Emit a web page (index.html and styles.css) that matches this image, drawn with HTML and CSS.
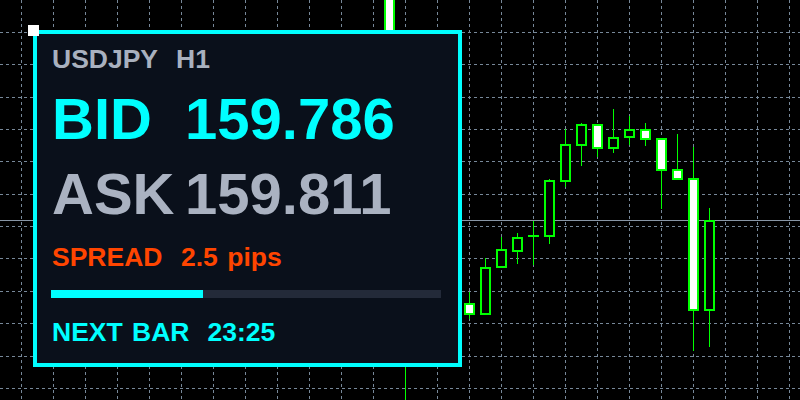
FILE: index.html
```html
<!DOCTYPE html>
<html lang="en">
<head>
    <meta charset="UTF-8">
    <meta name="viewport" content="width=device-width, initial-scale=1.0">
    <title>USDJPY H1</title>
    <link rel="stylesheet" href="styles.css">
</head>

<body>
    <div class="chart">
        <!-- 圖表：格線、價格線與K線 -->
        <svg class="chart-canvas" width="800" height="400" viewBox="0 0 800 400">
            <path class="grid" d="M21.5 0V400M53.5 0V400M85.5 0V400M117.5 0V400M149.5 0V400M181.5 0V400M213.5 0V400M245.5 0V400M277.5 0V400M309.5 0V400M341.5 0V400M373.5 0V400M405.5 0V400M437.5 0V400M469.5 0V400M501.5 0V400M533.5 0V400M565.5 0V400M597.5 0V400M629.5 0V400M661.5 0V400M693.5 0V400M725.5 0V400M757.5 0V400M789.5 0V400"/>
            <path class="grid" d="M0 32.5H800M0 64.5H800M0 97.5H800M0 129.5H800M0 161.5H800M0 194.5H800M0 226.5H800M0 258.5H800M0 291.5H800M0 323.5H800M0 356.5H800M0 388.5H800"/>
            <path class="bid-line" d="M0 220.5H800"/>

            <path class="wick" d="M389.5 -10V120M405.5 300V400M469.5 292V319M485.5 258V315M501.5 237V268M517.5 233V264M533.5 221V265M549.5 179V244M565.5 129V187M581.5 123V166M597.5 124V157M613.5 109V153M629.5 116V145M645.5 123V146M661.5 138V209M677.5 134V180M693.5 147V351M709.5 208V347"/>

            <rect class="bear" x="385" y="-10" width="9" height="110"/>
            <rect class="bear" x="465" y="304" width="9" height="10"/>
            <rect class="bull" x="481" y="268" width="9" height="46"/>
            <rect class="bull" x="497" y="250" width="9" height="17"/>
            <rect class="bull" x="513" y="238" width="9" height="13"/>
            <rect class="doji" x="528" y="235" width="11" height="2"/>
            <rect class="bull" x="545" y="181" width="9" height="55"/>
            <rect class="bull" x="561" y="145" width="9" height="36"/>
            <rect class="bull" x="577" y="125" width="9" height="20"/>
            <rect class="bear" x="593" y="125" width="9" height="23"/>
            <rect class="bull" x="609" y="138" width="9" height="10"/>
            <rect class="bull" x="625" y="130" width="9" height="7"/>
            <rect class="bear" x="641" y="130" width="9" height="9"/>
            <rect class="bear" x="657" y="139" width="9" height="31"/>
            <rect class="bear" x="673" y="170" width="9" height="9"/>
            <rect class="bear" x="689" y="179" width="9" height="131"/>
            <rect class="bull" x="705" y="221" width="9" height="89"/>
        </svg>

        <!-- 報價面板 -->
        <div class="quote-panel">
            <div class="row row-small symbol">
                <span class="symbol-name">USDJPY</span><span>H1</span>
            </div>
            <div class="row row-big bid">
                <span class="label">BID</span><span>159.786</span>
            </div>
            <div class="row row-big ask">
                <span class="label">ASK</span><span>159.811</span>
            </div>
            <div class="row row-small spread">
                <span class="label">SPREAD</span><span>2.5 pips</span>
            </div>
            <div class="progress">
                <div class="progress-fill" style="width: 39%"></div>
            </div>
            <div class="row row-small next-bar">
                <span class="label">NEXT BAR</span><span>23:25</span>
            </div>
        </div>

        <div class="handle"></div>
    </div>
</body>
</html>
```

FILE: styles.css
```css
body {
    margin: 0;
    background-color: #000000;
    font-family: 'Liberation Sans', Arial, sans-serif;
    font-weight: bold;
}

.chart {
    position: relative;
    width: 800px;
    height: 400px;
    overflow: hidden;
    background-color: #000000;
}

.chart-canvas {
    display: block;
}

.grid {
    fill: none;
    stroke: #778899;
    stroke-width: 1;
    stroke-dasharray: 3 3;
}

.bid-line {
    fill: none;
    stroke: #8896a6;
    stroke-width: 1;
}

.wick {
    fill: none;
    stroke: #00ff00;
    stroke-width: 1;
}

.bull,
.bear {
    stroke: #00ff00;
    stroke-width: 2;
}

.bull {
    fill: #000000;
}

.bear {
    fill: #ffffff;
}

.doji {
    fill: #00ff00;
}

.quote-panel {
    position: absolute;
    left: 33px;
    top: 30px;
    width: 429px;
    height: 337px;
    box-sizing: border-box;
    padding: 5px 17px 0 15px;
    background-color: #0a101b;
    border: 4px solid #00ffff;
}

.row {
    display: flex;
    white-space: nowrap;
}

.row-small {
    font-size: 26.5px;
    line-height: 40px;
    word-spacing: 2px;
}

.row-big {
    font-size: 58px;
    line-height: 70px;
    margin-top: 5px;
}

.row-big .label {
    min-width: 133px;
}

.row-small .label {
    min-width: 129px;
}

.symbol-name {
    padding-right: 18px;
}

.symbol {
    color: #a9b1bf;
}

.bid {
    color: #00ffff;
}

.ask {
    color: #aab2c1;
}

.spread {
    color: #ff4500;
    margin-top: 8px;
}

.progress {
    height: 8px;
    margin: 13px 0 0 -1px;
    background-color: #232a39;
}

.progress-fill {
    height: 100%;
    background-color: #00ffff;
}

.next-bar {
    color: #00ffff;
    margin-top: 14px;
}

.next-bar .label {
    padding-right: 18px;
}

.handle {
    position: absolute;
    left: 28px;
    top: 25px;
    width: 11px;
    height: 11px;
    background-color: #ffffff;
}
```
